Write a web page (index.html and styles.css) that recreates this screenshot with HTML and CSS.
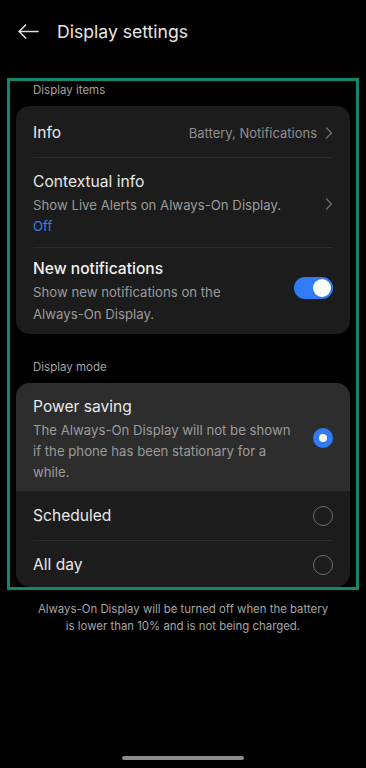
FILE: index.html
```html
<!DOCTYPE html>
<html lang="en">
<head>
<meta charset="utf-8">
<title>Display settings</title>
<link rel="stylesheet" href="styles.css">
</head>
<body>
<header class="header">
  <svg class="back" width="21" height="15" viewBox="0 0 21 15" fill="none" stroke="#e2e2e2" stroke-width="1.6" stroke-linecap="round" stroke-linejoin="round"><path d="M1.2 7.5H20"/><path d="M7.6 1L1.2 7.5L7.6 14"/></svg>
  <h1 class="title">Display settings</h1>
</header>

<main class="highlight">
  <div class="section-label">Display items</div>
  <section class="card">
    <div class="row row-single">
      <div class="row-title">Info</div>
      <div class="row-end">
        <span class="row-value">Battery, Notifications</span>
        <svg class="chev" width="8" height="12" viewBox="0 0 8 12" fill="none" stroke="#707070" stroke-width="1.3" stroke-linecap="round" stroke-linejoin="round"><path d="M1.5 1L6.5 6L1.5 11"/></svg>
      </div>
    </div>
    <div class="row row-multi row-divided row-context">
      <div class="row-text">
        <div class="row-title">Contextual info</div>
        <div class="row-sub">Show Live Alerts on Always-On Display.</div>
        <div class="row-sub row-link">Off</div>
      </div>
      <svg class="chev" width="8" height="12" viewBox="0 0 8 12" fill="none" stroke="#707070" stroke-width="1.3" stroke-linecap="round" stroke-linejoin="round"><path d="M1.5 1L6.5 6L1.5 11"/></svg>
    </div>
    <div class="row row-multi row-divided row-notif">
      <div class="row-text narrow">
        <div class="row-title strong">New notifications</div>
        <div class="row-sub">Show new notifications on the Always-On Display.</div>
      </div>
      <div class="toggle"><span class="knob"></span></div>
    </div>
  </section>

  <div class="section-label label-gap">Display mode</div>
  <section class="card card-last">
    <div class="row row-multi row-active">
      <div class="row-text narrow2">
        <div class="row-title">Power saving</div>
        <div class="row-sub">The Always-On Display will not be shown if the phone has been stationary for a while.</div>
      </div>
      <span class="radio radio-on"></span>
    </div>
    <div class="row row-plain">
      <div class="row-title">Scheduled</div>
      <span class="radio"></span>
    </div>
    <div class="row row-plain row-divided row-last">
      <div class="row-title">All day</div>
      <span class="radio"></span>
    </div>
  </section>
</main>

<p class="footer">Always-On Display will be turned off when the battery is lower than 10% and is not being charged.</p>

<div class="home-bar"></div>
</body>
</html>
```

FILE: styles.css
```css
* { box-sizing: border-box; }

html, body {
  margin: 0;
  padding: 0;
  background: #000;
}

body {
  width: 366px;
  min-height: 768px;
  display: flex;
  flex-direction: column;
  font-family: Inter, Roboto, "Noto Sans", sans-serif;
  color: #e6e6e6;
}

.header {
  height: 62px;
  display: flex;
  align-items: center;
  padding-left: 18px;
  gap: 18px;
}

.back { display: block; flex: none; }

.title {
  margin: 0;
  font-size: 17.6px;
  font-weight: 400;
  color: #e6e6e6;
}

.highlight {
  margin: 16px 7px 0;
  border: 3px solid #10876e;
  padding: 1px 6px 0;
}

.section-label {
  font-size: 11.5px;
  line-height: 16px;
  color: #a3a3a3;
  padding-left: 17px;
  margin-bottom: 8px;
}

.label-gap { margin-top: 25px; }

.card {
  background: #1c1c1c;
  border-radius: 14px;
  overflow: hidden;
}

.row {
  display: flex;
  align-items: center;
  justify-content: space-between;
  padding: 0 17px;
  position: relative;
}

.row-divided::before {
  content: "";
  position: absolute;
  top: 0;
  left: 17px;
  right: 17px;
  height: 1px;
  background: #2d2d2d;
}

.row-single { padding-top: 16px; padding-bottom: 13px; }

.row-multi { padding-top: 12.5px; padding-bottom: 9.5px; }

.row.row-context { padding-top: 13.5px; padding-bottom: 9.5px; }

.row.row-notif { align-items: flex-start; padding-top: 11px; padding-bottom: 9px; }

.row-title {
  font-size: 15.6px;
  line-height: 22px;
  color: #e8e8e8;
}

.row-multi .row-title { margin-bottom: 2px; }

.strong { font-weight: 500; color: #f0f0f0; }

.row-sub {
  font-size: 13.2px;
  line-height: 21.5px;
  color: #9b9b9b;
}

.row-link { color: #3a7ee6; }

.row-text { flex: 1; min-width: 0; }

.narrow { padding-right: 70px; }

.narrow2 { padding-right: 16px; }

.row-end {
  display: flex;
  align-items: center;
  gap: 8px;
}

.row-value {
  font-size: 13px;
  line-height: 22px;
  color: #8f8f8f;
}

.chev { display: block; flex: none; }

.toggle {
  flex: none;
  width: 39px;
  height: 22px;
  border-radius: 11px;
  background: #2f7cf6;
  margin-top: 19px;
  display: flex;
  align-items: center;
  justify-content: flex-end;
  padding-right: 2px;
}

.knob {
  width: 18px;
  height: 18px;
  border-radius: 50%;
  background: #fff;
}

.row.row-active {
  background: #2d2d2d;
  padding-top: 13px;
  padding-bottom: 8px;
}

.row-active .row-sub { line-height: 21px; }

.row-plain { padding-top: 13.5px; padding-bottom: 13px; }

.row-plain.row-divided { padding-top: 14px; }

.row-plain.row-last { padding-bottom: 11.5px; }

.radio {
  flex: none;
  width: 20px;
  height: 20px;
  border-radius: 50%;
  border: 1.5px solid #6e6e6e;
}

.radio-on {
  border: none;
  background: #2f7cf6;
  display: flex;
  align-items: center;
  justify-content: center;
  margin-bottom: 3px;
}

.radio-on::after {
  content: "";
  width: 8px;
  height: 8px;
  border-radius: 50%;
  background: #fff;
}

.footer {
  margin: 10.5px 0 0;
  padding: 0 36px;
  text-align: center;
  font-size: 11.4px;
  line-height: 17.4px;
  color: #a6a6a6;
}

.home-bar {
  margin: auto auto 8px;
  width: 122px;
  height: 4px;
  border-radius: 2px;
  background: #8a8a8a;
}
```
